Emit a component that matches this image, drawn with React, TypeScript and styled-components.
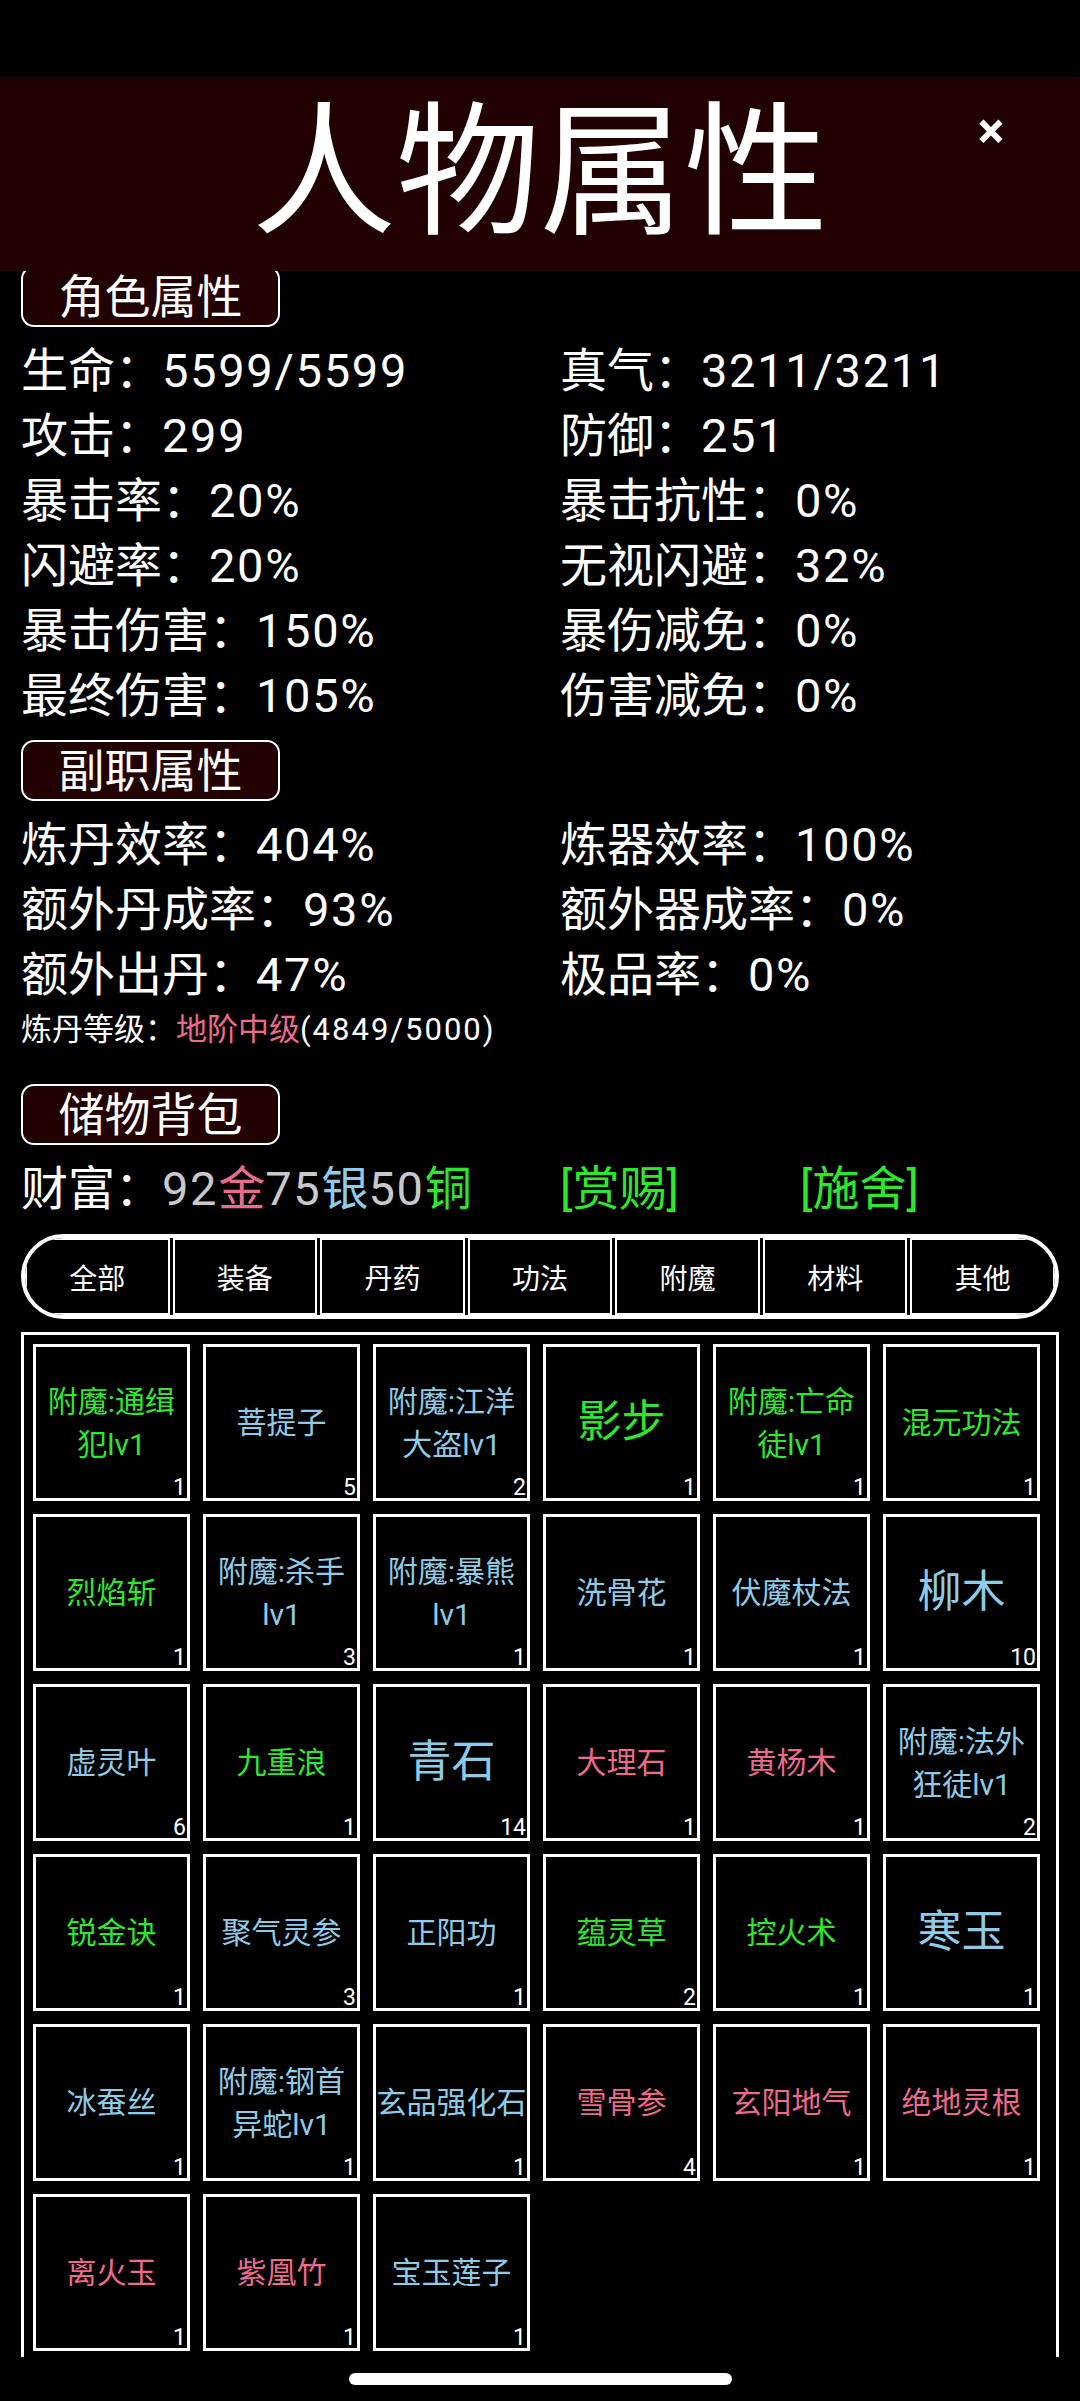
import React from 'react';
import styled, { createGlobalStyle } from 'styled-components';

const GREEN = '#2fe62f';
const BLUE = '#8fcbe6';
const PINK = '#ec6a8c';
const GRAY = '#c9c9c9';
const DARK_RED = '#210101';

type Tone = 'green' | 'blue' | 'pink';

const toneColor: Record<Tone, string> = {
  green: GREEN,
  blue: BLUE,
  pink: PINK,
};

const ROLE_STATS: [string, string][] = [
  ['生命', '5599/5599'],
  ['真气', '3211/3211'],
  ['攻击', '299'],
  ['防御', '251'],
  ['暴击率', '20%'],
  ['暴击抗性', '0%'],
  ['闪避率', '20%'],
  ['无视闪避', '32%'],
  ['暴击伤害', '150%'],
  ['暴伤减免', '0%'],
  ['最终伤害', '105%'],
  ['伤害减免', '0%'],
];

const JOB_STATS: [string, string][] = [
  ['炼丹效率', '404%'],
  ['炼器效率', '100%'],
  ['额外丹成率', '93%'],
  ['额外器成率', '0%'],
  ['额外出丹', '47%'],
  ['极品率', '0%'],
];

const TABS = ['全部', '装备', '丹药', '功法', '附魔', '材料', '其他'];

const ITEMS: { name: string; tone: Tone; count: number }[] = [
  { name: '附魔:通缉犯lv1', tone: 'green', count: 1 },
  { name: '菩提子', tone: 'blue', count: 5 },
  { name: '附魔:江洋大盗lv1', tone: 'blue', count: 2 },
  { name: '影步', tone: 'green', count: 1 },
  { name: '附魔:亡命徒lv1', tone: 'green', count: 1 },
  { name: '混元功法', tone: 'green', count: 1 },
  { name: '烈焰斩', tone: 'green', count: 1 },
  { name: '附魔:杀手lv1', tone: 'blue', count: 3 },
  { name: '附魔:暴熊lv1', tone: 'blue', count: 1 },
  { name: '洗骨花', tone: 'blue', count: 1 },
  { name: '伏魔杖法', tone: 'blue', count: 1 },
  { name: '柳木', tone: 'blue', count: 10 },
  { name: '虚灵叶', tone: 'blue', count: 6 },
  { name: '九重浪', tone: 'green', count: 1 },
  { name: '青石', tone: 'blue', count: 14 },
  { name: '大理石', tone: 'pink', count: 1 },
  { name: '黄杨木', tone: 'pink', count: 1 },
  { name: '附魔:法外狂徒lv1', tone: 'blue', count: 2 },
  { name: '锐金诀', tone: 'green', count: 1 },
  { name: '聚气灵参', tone: 'blue', count: 3 },
  { name: '正阳功', tone: 'blue', count: 1 },
  { name: '蕴灵草', tone: 'green', count: 2 },
  { name: '控火术', tone: 'green', count: 1 },
  { name: '寒玉', tone: 'blue', count: 1 },
  { name: '冰蚕丝', tone: 'blue', count: 1 },
  { name: '附魔:钢首异蛇lv1', tone: 'blue', count: 1 },
  { name: '玄品强化石', tone: 'blue', count: 1 },
  { name: '雪骨参', tone: 'pink', count: 4 },
  { name: '玄阳地气', tone: 'pink', count: 1 },
  { name: '绝地灵根', tone: 'pink', count: 1 },
  { name: '离火玉', tone: 'pink', count: 1 },
  { name: '紫凰竹', tone: 'pink', count: 1 },
  { name: '宝玉莲子', tone: 'blue', count: 1 },
];

const GlobalStyle = createGlobalStyle`
  html, body {
    margin: 0;
    padding: 0;
    background: #000;
    overflow: hidden;
  }
  body {
    font-family: Roboto, 'Noto Sans CJK SC', 'Noto Sans', sans-serif;
    color: #fff;
  }
  * {
    box-sizing: border-box;
  }
`;

const App = () => {
  return (
    <Page>
      <GlobalStyle />
      <StatusBar />
      <Header>
        <Title>人物属性</Title>
        <CloseButton>×</CloseButton>
      </Header>

      <Content>
        <SectionLabel $first>角色属性</SectionLabel>
        <StatGrid>
          {ROLE_STATS.map(([label, value]) => (
            <Stat key={label}>
              {label}：<Num>{value}</Num>
            </Stat>
          ))}
        </StatGrid>

        <SectionLabel>副职属性</SectionLabel>
        <StatGrid>
          {JOB_STATS.map(([label, value]) => (
            <Stat key={label}>
              {label}：<Num>{value}</Num>
            </Stat>
          ))}
        </StatGrid>
        <LevelLine>
          炼丹等级：<Colored $color={PINK}>地阶中级</Colored>
          <Num $wide>(4849/5000)</Num>
        </LevelLine>

        <SectionLabel $spaced>储物背包</SectionLabel>
        <WealthRow>
          <span>
            财富：<Num $color={GRAY}>92</Num>
            <Colored $color={PINK}>金</Colored>
            <Num $color={GRAY}>75</Num>
            <Colored $color={BLUE}>银</Colored>
            <Num $color={GRAY}>50</Num>
            <Colored $color={GREEN}>铜</Colored>
          </span>
          <Colored $color={GREEN}>[赏赐]</Colored>
          <Colored $color={GREEN}>[施舍]</Colored>
        </WealthRow>

        <TabBar>
          {TABS.map((tab) => (
            <Tab key={tab}>{tab}</Tab>
          ))}
        </TabBar>

        <Bag>
          {ITEMS.map((item, i) => (
            <Slot key={i}>
              <ItemName
                $color={toneColor[item.tone]}
                $big={item.name.length === 2}
              >
                {item.name}
              </ItemName>
              <Count>{item.count}</Count>
            </Slot>
          ))}
        </Bag>
      </Content>

      <HomeIndicator />
    </Page>
  );
};

const Page = styled.div`
  width: 1080px;
  height: 2401px;
  background: #000;
  display: flex;
  flex-direction: column;
  overflow: hidden;
`;

const StatusBar = styled.div`
  height: 77px;
  background: #000;
`;

const Header = styled.header`
  position: relative;
  z-index: 2;
  height: 194px;
  background: ${DARK_RED};
  display: flex;
  align-items: center;
  justify-content: center;
`;

const Title = styled.h1`
  margin: 0;
  font-size: 144px;
  font-weight: 400;
  line-height: 1;
  color: #fff;
`;

const CloseButton = styled.div`
  position: absolute;
  top: 31px;
  left: 968px;
  width: 46px;
  height: 46px;
  display: flex;
  align-items: center;
  justify-content: center;
  font-size: 50px;
  font-weight: 700;
  line-height: 1;
  color: #fff;
`;

const Content = styled.main`
  padding: 0 21px;
  display: flex;
  flex-direction: column;
`;

const SectionLabel = styled.div<{ $first?: boolean; $spaced?: boolean }>`
  width: 259px;
  height: 61px;
  margin-top: ${(p) => (p.$first ? '-5px' : p.$spaced ? '32px' : '12px')};
  border: 2.5px solid #fff;
  border-radius: 13px;
  background: ${DARK_RED};
  display: flex;
  align-items: center;
  justify-content: center;
  font-size: 46px;
  line-height: 1;
  color: #fff;
`;

const StatGrid = styled.div`
  margin-top: 11px;
  display: grid;
  grid-template-columns: 539px 1fr;
`;

const Stat = styled.div`
  font-size: 47px;
  line-height: 65px;
  white-space: nowrap;
`;

const Num = styled.span<{ $color?: string; $wide?: boolean }>`
  letter-spacing: ${(p) => (p.$wide ? '2px' : '1.7px')};
  color: ${(p) => p.$color ?? 'inherit'};
`;

const LevelLine = styled.div`
  font-size: 31px;
  line-height: 45px;
  white-space: nowrap;
`;

const Colored = styled.span<{ $color: string }>`
  color: ${(p) => p.$color};
`;

const WealthRow = styled.div`
  margin-top: 11px;
  display: grid;
  grid-template-columns: 539px 240px 1fr;
  font-size: 47px;
  line-height: 65px;
  white-space: nowrap;
`;

const TabBar = styled.nav`
  margin-top: 13px;
  height: 85px;
  border: 4px solid #fff;
  border-radius: 43px;
  overflow: hidden;
  display: flex;
  gap: 3px;
`;

const Tab = styled.div`
  flex: 1;
  border: 2px solid #fff;
  display: flex;
  align-items: center;
  justify-content: center;
  font-size: 28px;
  color: #fff;
`;

const Bag = styled.section`
  margin-top: 13px;
  border: 3px solid #fff;
  border-bottom: none;
  padding: 9px 0 6px 9px;
  display: grid;
  grid-template-columns: repeat(6, 157px);
  grid-auto-rows: 157px;
  column-gap: 13px;
  row-gap: 13px;
`;

const Slot = styled.div`
  position: relative;
  box-shadow: inset 0 0 0 3px #fff;
  display: flex;
  align-items: center;
  justify-content: center;
  text-align: center;
`;

const ItemName = styled.div<{ $color: string; $big: boolean }>`
  width: 100%;
  font-size: ${(p) => (p.$big ? '44px' : '30px')};
  line-height: 43px;
  color: ${(p) => p.$color};
`;

const Count = styled.span`
  position: absolute;
  right: 4px;
  bottom: 2px;
  font-size: 23px;
  line-height: 23px;
  color: #fff;
`;

const HomeIndicator = styled.div`
  margin: 16px auto 0;
  width: 383px;
  height: 12px;
  border-radius: 6px;
  background: #fff;
`;

export default App;
